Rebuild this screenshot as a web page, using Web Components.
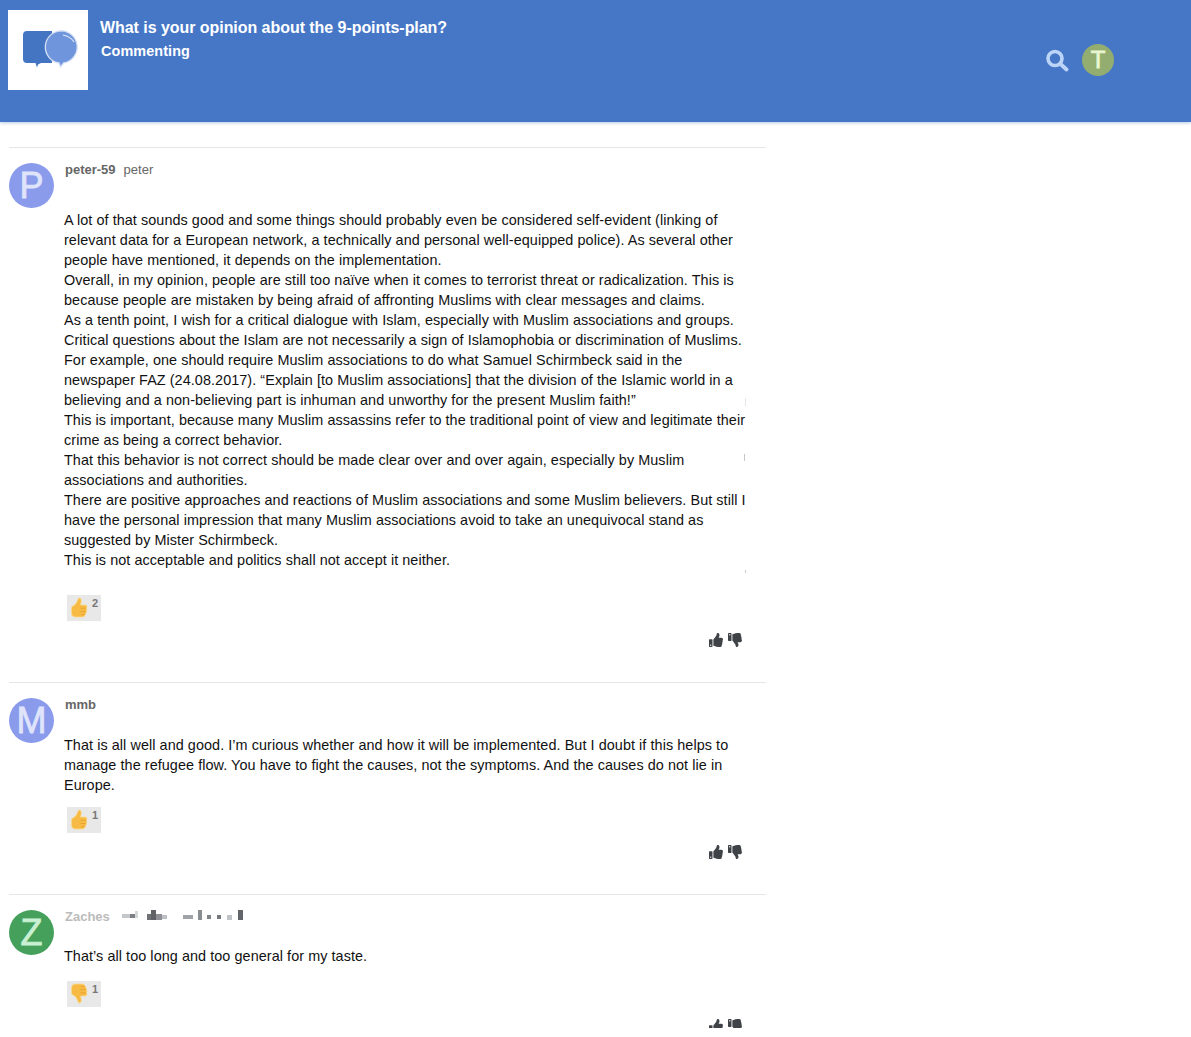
<!DOCTYPE html>
<html><head><meta charset="utf-8">
<style>
html,body{margin:0;padding:0;background:#fff;font-family:"Liberation Sans",Arial,sans-serif}
body{height:1037px;overflow:hidden}
</style></head><body>
<x-app>
  <x-header slot="header" title-text="What is your opinion about the 9-points-plan?" sub="Commenting"></x-header>
  <x-comment letter="P" color="#8a9bec" ink="#dfe4fb" name="peter-59" extra="peter" count="2" kind="up" marks style="--meta:62px;--rgap:25px">
    A lot of that sounds good and some things should probably even be considered self-evident (linking of relevant data for a European network, a technically and personal well-equipped police). As several other people have mentioned, it depends on the implementation.<br>
    Overall, in my opinion, people are still too naïve when it comes to terrorist threat or radicalization. This is because people are mistaken by being afraid of affronting Muslims with clear messages and claims.<br>
    As a tenth point, I wish for a critical dialogue with Islam, especially with Muslim associations and groups.<br>
    Critical questions about the Islam are not necessarily a sign of Islamophobia or discrimination of Muslims.<br>
    For example, one should require Muslim associations to do what Samuel Schirmbeck said in the newspaper FAZ (24.08.2017). “Explain [to Muslim associations] that the division of the Islamic world in a believing and a non-believing part is inhuman and unworthy for the present Muslim faith!”<br>
    This is important, because many Muslim assassins refer to the traditional point of view and legitimate their crime as being a correct behavior.<br>
    That this behavior is not correct should be made clear over and over again, especially by Muslim associations and authorities.<br>
    There are positive approaches and reactions of Muslim associations and some Muslim believers. But still I have the personal impression that many Muslim associations avoid to take an unequivocal stand as suggested by Mister Schirmbeck.<br>
    This is not acceptable and politics shall not accept it neither.
  </x-comment>
  <x-comment letter="M" color="#8a9bec" ink="#dfe4fb" name="mmb" count="1" kind="up" style="--meta:52px;--rgap:12px">
    That is all well and good. I’m curious whether and how it will be implemented. But I doubt if this helps to manage the refugee flow. You have to fight the causes, not the symptoms. And the causes do not lie in Europe.
  </x-comment>
  <x-comment letter="Z" color="#45a05c" ink="#c9f0d2" name="Zaches" faded count="1" kind="down" style="--meta:51px;--rgap:15px">
    That’s all too long and too general for my taste.
  </x-comment>
</x-app>
<script>
const UP='M104 224H24c-13.255 0-24 10.745-24 24v240c0 13.255 10.745 24 24 24h80c13.255 0 24-10.745 24-24V248c0-13.255-10.745-24-24-24zM64 472c-13.255 0-24-10.745-24-24s10.745-24 24-24 24 10.745 24 24-10.745 24-24 24zM384 81.452c0 42.416-25.97 66.208-33.277 94.548h101.723c33.397 0 59.397 27.746 59.553 58.098.084 17.938-7.546 37.249-19.439 49.197l-.11.11c9.836 23.337 8.237 56.037-9.308 79.469 8.681 25.895-.069 57.704-16.382 74.757 4.298 17.598 2.244 32.575-6.148 44.632C440.202 511.587 389.616 512 346.839 512l-2.845-.001c-48.287-.017-87.806-17.598-119.56-31.725-15.957-7.099-36.821-15.887-52.651-16.178-6.54-.12-11.783-5.457-11.783-11.998v-213.77c0-3.2 1.282-6.271 3.558-8.521 39.614-39.144 56.648-80.587 89.117-113.111 14.804-14.832 20.188-37.236 25.393-58.902C282.515 39.293 291.817 0 312 0c24 0 72 8 72 81.452z';
function thumb(kind,size,fill){
  const t=kind==='down'?' transform="translate(0 512) scale(1 -1)"':'';
  return `<svg width="${size}" height="${size}" viewBox="0 0 512 512" style="display:block"><path fill="${fill}"${t} d="${UP}"/></svg>`;
}
function emoji(kind){
  const t=kind==='down'?' transform="translate(0 21) scale(1 -1)"':'';
  return `<svg width="21" height="21" viewBox="0 0 21 21" style="display:block"><g${t}>
    <path fill="#f7bb45" stroke="#fbd98a" stroke-width=".8" d="M2.500 11C2.500 9.500 4 9 5.500 8 7.500 6.500 8.500 3.500 9.500 1.300 11 .5 12.500 2 12.300 4 12.200 6 11.500 7 11.500 8L16 8C18 8 18.500 10.500 17.300 11.200 18.500 12.300 18 14 17 14.500 17.800 15.500 17 17.200 16 17.600 16 19 15 20 13 20L6.500 20C3.500 20 2.500 18 2.500 16Z"/>
    <path fill="none" stroke="#e8a32c" stroke-width=".9" d="M11.500 11.200H17M11.500 14.500H16.800M12 17.600H15.800"/>
  </g></svg>`;
}
function def(name,css,render){
  customElements.define(name,class extends HTMLElement{
    connectedCallback(){
      if(this.shadowRoot)return;
      const r=this.attachShadow({mode:'open'});
      r.innerHTML=`<style>${css}</style>`+render(this);
    }
  });
}
def('x-avatar',`:host{display:flex;align-items:center;justify-content:center;border-radius:50%;font-family:"Liberation Sans",sans-serif;line-height:1;flex:none;-webkit-text-stroke:.8px currentColor}`,
  el=>{
    const s=el.getAttribute('size')||45;
    el.style.cssText+=`;width:${s}px;height:${s}px;background:${el.getAttribute('color')};color:${el.getAttribute('ink')};font-size:${el.getAttribute('fs')||36}px`;
    return el.getAttribute('letter');
  });
def('x-logo',`:host{display:block;width:80px;height:80px;background:#fff;flex:none}svg{display:block}`,
  ()=>`<svg width="80" height="80" viewBox="0 0 80 80">
    <path fill="#4475c2" d="M19 21H44V53H33L30 54.500 29 57.500 27.500 53H19A4 4 0 0 1 15 49V25A4 4 0 0 1 19 21Z"/>
    <path fill="#6f95dd" stroke="#d5e0f5" stroke-width="1.300" d="M53.500 20.800A16.200 16.200 0 0 1 55.500 53L52.500 57 51 53A16.200 16.200 0 0 1 53.500 20.800Z"/>
    <path fill="none" stroke="#dce7f9" stroke-width="1.200" d="M55 25C60 26 64 28.500 66 32"/>
  </svg>`);
def('x-search',`:host{display:block;width:24px;height:24px}svg{display:block}`,
  ()=>`<svg width="24" height="24" viewBox="0 0 24 24"><circle cx="10" cy="10.500" r="7" fill="none" stroke="#bcd4f7" stroke-width="3.600"/><path d="M15.500 16l6 5.500" stroke="#bcd4f7" stroke-width="3.800" stroke-linecap="round"/></svg>`);
def('x-header',`
  :host{display:flex;height:122px;background:#4677c7;box-shadow:0 1px 3px rgba(70,119,199,.4);box-sizing:border-box;padding:10px 0 0 8px;color:#fff;position:relative}
  .t{margin-left:12px;font-weight:700}
  h1{margin:0;font-size:16px;line-height:19px;padding-top:8px;font-weight:700;letter-spacing:-.05px}
  h2{margin:0 0 0 1px;font-size:14.400px;line-height:18px;padding-top:5px;font-weight:700;letter-spacing:.1px}
  .tools{margin-left:auto;display:flex;align-items:center;gap:13px;height:32px;margin-top:34px;margin-right:77px}
`,el=>`<x-logo></x-logo><div class="t"><h1>${el.getAttribute('title-text')}</h1><h2>${el.getAttribute('sub')}</h2></div>
  <div class="tools"><x-search></x-search><x-avatar size="32" fs="24" letter="T" color="#93ad70" ink="#eaf6d2"></x-avatar></div>`);
def('x-reaction',`
  :host{display:flex;width:34px;height:26px;background:#e8e8e8;position:relative;box-sizing:border-box;padding:2px 0 0 2px}
  b{position:absolute;right:3px;top:2px;font-size:11px;line-height:13px;color:#777}
`,el=>emoji(el.getAttribute('kind'))+`<b>${el.getAttribute('count')}</b>`);
def('x-redacted',`:host{display:block;margin-left:12px;margin-top:-2px}svg{display:block}`,
  ()=>`<svg width="122" height="12" viewBox="0 0 122 12">
    <rect x="0" y="4" width="8" height="4" fill="#c4c8cb"/><rect x="8" y="4" width="5" height="4" fill="#7d8186"/><rect x="13" y="1" width="3" height="7" fill="#d4d8d8"/>
    <rect x="25" y="4" width="6" height="6" fill="#6e7276"/><rect x="29" y="0" width="5" height="10" fill="#5e6266"/><rect x="34" y="4" width="6" height="6" fill="#8d9095"/><rect x="40" y="5" width="5" height="4" fill="#bcc0c4"/>
    <rect x="61" y="5" width="10" height="4" fill="#a0a4a8"/><rect x="76" y="0" width="4" height="10" fill="#8a8e92"/><rect x="85" y="5" width="4" height="4" fill="#808488"/><rect x="95" y="5" width="4" height="4" fill="#74787c"/><rect x="105" y="5" width="5" height="5" fill="#c0c4c6"/><rect x="116" y="0" width="5" height="10" fill="#62666a"/>
  </svg>`);
def('x-comment',`
  :host{display:grid;grid-template-columns:45px 1fr;column-gap:10px;border-top:1px solid #e6e6e6;padding:15px 0 0 0;box-sizing:border-box;position:relative}
  .meta{height:calc(var(--meta) - 15px);font-size:12px;line-height:14px;color:#666;padding-left:1px}
  .meta span{display:flex;align-items:center}
  b{font-weight:700;font-size:13px;color:#666}
  b.f{color:#bbb}
  i{font-style:normal;margin-left:8px;font-size:13px}
  .text{font-size:14.400px;line-height:20px;color:#111;width:685px;letter-spacing:.07px}
  x-reaction{margin:var(--rgap) 0 0 3px}
  .acts{display:flex;justify-content:flex-end;gap:5px;margin:12px 24px 0 0;padding-bottom:35px}
  .m{position:absolute;width:1px;background:#e4e6ea}
`,el=>{
  const f=el.hasAttribute('faded');
  const marks=el.hasAttribute('marks')?`<u class="m" style="left:736px;top:250px;height:8px"></u><u class="m" style="left:735px;top:306px;height:7px;background:#c4c8cc"></u><u class="m" style="left:736px;top:422px;height:3px;background:#c8ccd0"></u>`:'';
  return `<x-avatar letter="${el.getAttribute('letter')}" color="${el.getAttribute('color')}" ink="${el.getAttribute('ink')}"></x-avatar>
  <div><div class="meta"><span><b class="${f?'f':''}">${el.getAttribute('name')}</b>${f?'<x-redacted></x-redacted>':''}${el.getAttribute('extra')?`<i>${el.getAttribute('extra')}</i>`:''}</span></div>
  <div class="text"><slot></slot></div>
  <x-reaction kind="${el.getAttribute('kind')}" count="${el.getAttribute('count')}"></x-reaction>
  <div class="acts">${thumb('up',14,'#3f4246')}${thumb('down',14,'#3f4246')}</div></div>${marks}`;
});
def('x-app',`
  :host{display:block}
  main{margin:25px 0 0 9px;width:757px;height:881px;overflow:hidden}
`,()=>`<slot name="header"></slot><main><slot></slot></main>`);
</script>
</body></html>
